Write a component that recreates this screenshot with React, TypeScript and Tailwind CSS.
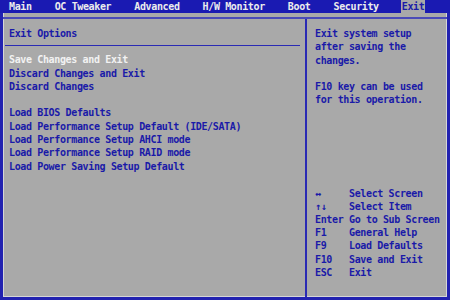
const tabs = ['Main', 'OC Tweaker', 'Advanced', 'H/W Monitor', 'Boot', 'Security', 'Exit']

const options = [
  'Save Changes and Exit',
  'Discard Changes and Exit',
  'Discard Changes',
  '',
  'Load BIOS Defaults',
  'Load Performance Setup Default (IDE/SATA)',
  'Load Performance Setup AHCI mode',
  'Load Performance Setup RAID mode',
  'Load Power Saving Setup Default',
]

const keys: [string, string][] = [
  ['\u2194', 'Select Screen'],
  ['\u2191\u2193', 'Select Item'],
  ['Enter', 'Go to Sub Screen'],
  ['F1', 'General Help'],
  ['F9', 'Load Defaults'],
  ['F10', 'Save and Exit'],
  ['ESC', 'Exit'],
]

export default function App() {
  return (
    <div className="flex h-[300px] w-[450px] flex-col overflow-hidden bg-[#a9a9a9] font-['DejaVu_Sans_Mono',monospace] text-[10px] font-bold tracking-[-0.36px] text-[#1a1aa8]">
      {/* Top menu bar */}
      <div className="flex h-[13px] items-center gap-[21px] bg-[#1a1ab2] pl-[8px] leading-[13px]">
        {tabs.map((t) => (
          <span
            key={t}
            className={
              t === 'Exit'
                ? 'bg-[#a9a9a9] px-[1px] text-[#1a1aa8]'
                : 'px-[1px] text-[#ececec]'
            }
          >
            {t}
          </span>
        ))}
      </div>

      {/* Main frame */}
      <div className="flex flex-1 flex-col border-x-[3px] border-b-[3px] border-[#2222b0] pt-[4px] shadow-[inset_1px_-1px_0_#d6d6d6,inset_-1px_0_0_#d6d6d6]">
        <div className="flex flex-1 border-t-[2px] border-[#4a4ab8] leading-[13.3px]">
          {/* Left column */}
          <div className="flex w-[304px] flex-col border-r-[2px] border-[#2a2ab4] pt-[8px]">
            <div className="pl-[6px]">Exit Options</div>
            <div className="mt-[5px] mb-[7px] ml-[2px] mr-[5px] h-[1px] bg-[#2a2ab4]" />
            <div className="flex flex-col pl-[6px]">
              {options.map((o, i) => (
                <div key={i} className={i === 0 ? 'h-[13.3px] text-[#f2f2f2]' : 'h-[13.3px]'}>
                  {o}
                </div>
              ))}
            </div>
          </div>

          {/* Right column */}
          <div className="flex flex-1 flex-col pt-[8px] pb-[18px] pl-[8px]">
            <div>Exit system setup</div>
            <div>after saving the</div>
            <div>changes.</div>
            <div className="h-[13.3px]" />
            <div>F10 key can be used</div>
            <div>for this operation.</div>

            <div className="mt-auto flex flex-col">
              {keys.map(([k, d]) => (
                <div key={k} className="flex h-[13.2px]">
                  <span className="w-[34px] shrink-0">{k}</span>
                  <span>{d}</span>
                </div>
              ))}
            </div>
          </div>
        </div>
      </div>
    </div>
  )
}
